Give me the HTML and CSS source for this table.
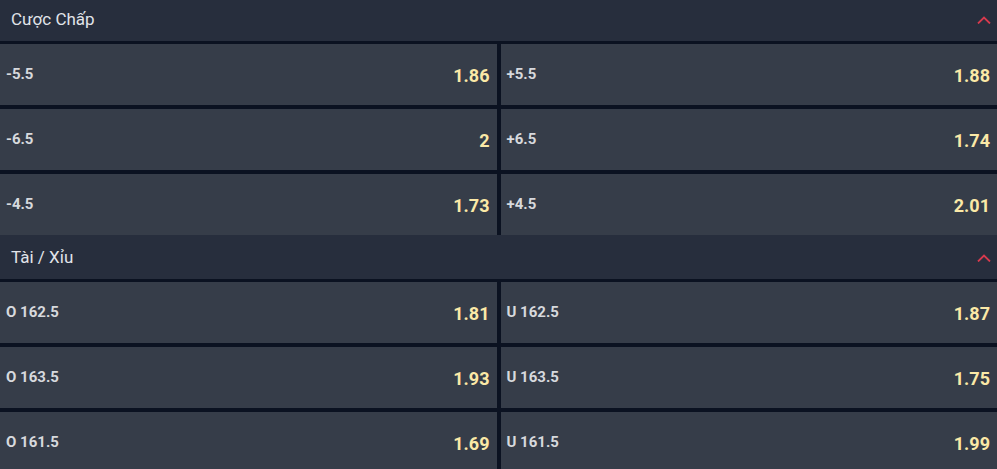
FILE: index.html
```html
<!DOCTYPE html>
<html lang="vi">
<head>
  <meta charset="UTF-8" />
  <meta name="viewport" content="width=device-width, initial-scale=1.0"/>
  <title>Kèo</title>
  <link rel="stylesheet" href="styles.css">
</head>
<body>

<div class="markets">
  <!-- CUOC CHAP -->
  <div class="market">
    <div class="market-head">
      <span class="market-title">Cược Chấp</span>
      <svg class="chevron" viewBox="0 0 14 8" fill="none">
        <path d="M1 7.5 L7 1.5 L13 7.5" stroke="currentColor" stroke-width="1.8"/>
      </svg>
    </div>
    <div class="odds-grid">
      <div class="cell"><span class="label">-5.5</span><span class="price">1.86</span></div>
      <div class="cell"><span class="label">+5.5</span><span class="price">1.88</span></div>
      <div class="cell"><span class="label">-6.5</span><span class="price">2</span></div>
      <div class="cell"><span class="label">+6.5</span><span class="price">1.74</span></div>
      <div class="cell"><span class="label">-4.5</span><span class="price">1.73</span></div>
      <div class="cell"><span class="label">+4.5</span><span class="price">2.01</span></div>
    </div>
  </div>

  <!-- TAI XIU -->
  <div class="market">
    <div class="market-head">
      <span class="market-title">Tài / Xỉu</span>
      <svg class="chevron" viewBox="0 0 14 8" fill="none">
        <path d="M1 7.5 L7 1.5 L13 7.5" stroke="currentColor" stroke-width="1.8"/>
      </svg>
    </div>
    <div class="odds-grid">
      <div class="cell"><span class="label">O 162.5</span><span class="price">1.81</span></div>
      <div class="cell"><span class="label">U 162.5</span><span class="price">1.87</span></div>
      <div class="cell"><span class="label">O 163.5</span><span class="price">1.93</span></div>
      <div class="cell"><span class="label">U 163.5</span><span class="price">1.75</span></div>
      <div class="cell"><span class="label">O 161.5</span><span class="price">1.69</span></div>
      <div class="cell"><span class="label">U 161.5</span><span class="price">1.99</span></div>
    </div>
  </div>
</div>

</body>
</html>
```

FILE: styles.css
```css
:root {
  --head-bg: #272e3d;
  --cell-bg: #363d49;
  --line: #0b1221;
  --label: #d7d9dd;
  --price: #fbe9a7;
  --chevron: #d83a4e;
}

* {
  box-sizing: border-box;
  margin: 0;
  padding: 0;
}

body {
  font-family: Roboto, 'Liberation Sans', sans-serif;
  background: var(--line);
  overflow: hidden;
}

/* first header is partly scrolled out of view */
.markets {
  margin-top: -3px;
}

.market-head {
  height: 44px;
  background: var(--head-bg);
  display: flex;
  align-items: center;
  justify-content: space-between;
  padding: 0 6px 0 11px;
}

.market-title {
  font-size: 17px;
  color: #e1e4e9;
}

.chevron {
  width: 14px;
  height: 8px;
  color: var(--chevron);
  margin-top: 1px;
}

.odds-grid {
  display: grid;
  grid-template-columns: 1fr 1fr;
  gap: 4px;
  padding-top: 3px;
  background: var(--line);
}

.cell {
  height: 61px;
  background: var(--cell-bg);
  display: flex;
  align-items: center;
  justify-content: space-between;
  padding: 0 7px 0 6px;
}

.label {
  font-size: 15px;
  font-weight: 700;
  color: var(--label);
  margin-top: -1px;
}

.price {
  font-size: 18px;
  font-weight: 700;
  color: var(--price);
  margin-top: 1px;
}
```
